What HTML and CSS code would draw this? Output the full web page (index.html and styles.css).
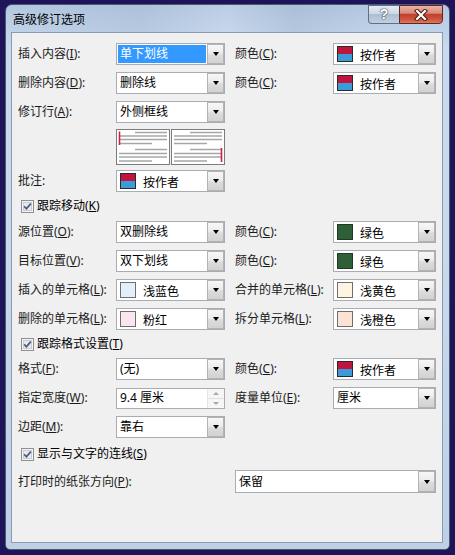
FILE: index.html
```html
<!DOCTYPE html>
<html lang="zh-CN">
<head>
<meta charset="utf-8">
<title>高级修订选项</title>
<link rel="stylesheet" href="styles.css">
</head>
<body>
<div class="window">
  <div class="titlebar">
    <div class="title">高级修订选项</div>
    <div class="caption">
      <div class="btn-help">?</div>
      <div class="btn-close">
        <svg width="14" height="12" viewBox="0 0 14 12"><path d="M3 2 L11 10 M11 2 L3 10" stroke="#4a1c16" stroke-width="4.2" stroke-linecap="square"/><path d="M3 2 L11 10 M11 2 L3 10" stroke="#ffffff" stroke-width="2.2" stroke-linecap="square"/></svg>
      </div>
    </div>
  </div>
  <div class="client">
    <div class="row first">
      <div class="lab">插入内容(<u>I</u>):</div>
      <div class="combo"><span class="val selected">单下划线</span><span class="drop"></span></div>
      <div class="lab lab-r">颜色(<u>C</u>):</div>
      <div class="combo"><span class="val"><i class="sw sw-author"></i><span class="swt">按作者</span></span><span class="drop"></span></div>
    </div>
    <div class="row">
      <div class="lab">删除内容(<u>D</u>):</div>
      <div class="combo"><span class="val">删除线</span><span class="drop"></span></div>
      <div class="lab lab-r">颜色(<u>C</u>):</div>
      <div class="combo"><span class="val"><i class="sw sw-author"></i><span class="swt">按作者</span></span><span class="drop"></span></div>
    </div>
    <div class="row">
      <div class="lab">修订行(<u>A</u>):</div>
      <div class="combo"><span class="val">外侧框线</span><span class="drop"></span></div>
    </div>
    <div class="row preview-row gap6">
      <div></div>
      <div class="preview">
        <svg width="54" height="36" viewBox="0 0 54 36">
          <rect x="0.5" y="0.5" width="53" height="35" fill="#fff" stroke="#7c7c7c"/>
          <g stroke="#a6a6a6" stroke-width="1.6">
            <path d="M19 3.5 H51 M3 7 H51 M3 10.5 H51 M3 14.5 H36 M19 20.5 H51 M3 24.5 H51 M3 28 H51 M3 32 H36"/>
          </g>
          <path d="M3.5 2.5 V16" stroke="#d0203a" stroke-width="1.6"/>
        </svg>
        <svg width="54" height="36" viewBox="0 0 54 36">
          <rect x="0.5" y="0.5" width="53" height="35" fill="#fff" stroke="#7c7c7c"/>
          <g stroke="#a6a6a6" stroke-width="1.6">
            <path d="M19 3.5 H51 M3 7 H51 M3 10.5 H51 M3 14.5 H36 M19 20.5 H51 M3 24.5 H51 M3 28 H51 M3 32 H36"/>
          </g>
          <path d="M50.5 19 V33" stroke="#d0203a" stroke-width="1.6"/>
        </svg>
      </div>
    </div>
    <div class="row gap5">
      <div class="lab">批注:</div>
      <div class="combo"><span class="val"><i class="sw sw-author"></i><span class="swt">按作者</span></span><span class="drop"></span></div>
    </div>
    <div class="check-row gap3">
      <span class="cb"><svg width="13" height="13" viewBox="0 0 13 13"><rect x="0.5" y="0.5" width="12" height="12" fill="#f4f4f4" stroke="#8e8f8f"/><rect x="2.5" y="2.5" width="8" height="8" fill="#e6e9ef" stroke="#c7ccd6"/><path d="M3.2 6.4 L5.4 8.8 L9.8 3.6" fill="none" stroke="#4c5a78" stroke-width="1.7"/></svg></span>
      <span>跟踪移动(<u>K</u>)</span>
    </div>
    <div class="row gap4">
      <div class="lab">源位置(<u>O</u>):</div>
      <div class="combo"><span class="val">双删除线</span><span class="drop"></span></div>
      <div class="lab lab-r">颜色(<u>C</u>):</div>
      <div class="combo"><span class="val"><i class="sw sw-green"></i><span class="swt">绿色</span></span><span class="drop"></span></div>
    </div>
    <div class="row">
      <div class="lab">目标位置(<u>V</u>):</div>
      <div class="combo"><span class="val">双下划线</span><span class="drop"></span></div>
      <div class="lab lab-r">颜色(<u>C</u>):</div>
      <div class="combo"><span class="val"><i class="sw sw-green"></i><span class="swt">绿色</span></span><span class="drop"></span></div>
    </div>
    <div class="row">
      <div class="lab">插入的单元格(<u>L</u>):</div>
      <div class="combo"><span class="val"><i class="sw sw-lblue"></i><span class="swt">浅蓝色</span></span><span class="drop"></span></div>
      <div class="lab lab-r">合并的单元格(<u>L</u>):</div>
      <div class="combo"><span class="val"><i class="sw sw-lyellow"></i><span class="swt">浅黄色</span></span><span class="drop"></span></div>
    </div>
    <div class="row">
      <div class="lab">删除的单元格(<u>L</u>):</div>
      <div class="combo"><span class="val"><i class="sw sw-pink"></i><span class="swt">粉红</span></span><span class="drop"></span></div>
      <div class="lab lab-r">拆分单元格(<u>L</u>):</div>
      <div class="combo"><span class="val"><i class="sw sw-lorange"></i><span class="swt">浅橙色</span></span><span class="drop"></span></div>
    </div>
    <div class="check-row gap3">
      <span class="cb"><svg width="13" height="13" viewBox="0 0 13 13"><rect x="0.5" y="0.5" width="12" height="12" fill="#f4f4f4" stroke="#8e8f8f"/><rect x="2.5" y="2.5" width="8" height="8" fill="#e6e9ef" stroke="#c7ccd6"/><path d="M3.2 6.4 L5.4 8.8 L9.8 3.6" fill="none" stroke="#4c5a78" stroke-width="1.7"/></svg></span>
      <span>跟踪格式设置(<u>T</u>)</span>
    </div>
    <div class="row gap3">
      <div class="lab">格式(<u>F</u>):</div>
      <div class="combo"><span class="val">(无)</span><span class="drop"></span></div>
      <div class="lab lab-r">颜色(<u>C</u>):</div>
      <div class="combo"><span class="val"><i class="sw sw-author"></i><span class="swt">按作者</span></span><span class="drop"></span></div>
    </div>
    <div class="row">
      <div class="lab">指定宽度(<u>W</u>):</div>
      <div class="spin"><span class="val">9.4 厘米</span><span class="spin-btns"><span class="up"></span><span class="down"></span></span></div>
      <div class="lab lab-r">度量单位(<u>E</u>):</div>
      <div class="combo"><span class="val">厘米</span><span class="drop"></span></div>
    </div>
    <div class="row">
      <div class="lab">边距(<u>M</u>):</div>
      <div class="combo"><span class="val">靠右</span><span class="drop"></span></div>
    </div>
    <div class="check-row gap5">
      <span class="cb"><svg width="13" height="13" viewBox="0 0 13 13"><rect x="0.5" y="0.5" width="12" height="12" fill="#f4f4f4" stroke="#8e8f8f"/><rect x="2.5" y="2.5" width="8" height="8" fill="#e6e9ef" stroke="#c7ccd6"/><path d="M3.2 6.4 L5.4 8.8 L9.8 3.6" fill="none" stroke="#4c5a78" stroke-width="1.7"/></svg></span>
      <span>显示与文字的连线(<u>S</u>)</span>
    </div>
    <div class="row wide gap5">
      <div class="lab">打印时的纸张方向(<u>P</u>):</div>
      <div class="combo tall"><span class="val">保留</span><span class="drop"></span></div>
    </div>
  </div>
</div>
</body>
</html>
```

FILE: styles.css
```css
* { box-sizing: border-box; }
html, body { margin: 0; }
body {
  width: 455px;
  height: 555px;
  overflow: hidden;
  padding: 4px 5px 5px 5px;
  background: #1f1459;
  font-family: "Noto Sans", "Noto Sans CJK SC", sans-serif;
  font-size: 12px;
  line-height: 16px;
  color: #000;
}
u { text-decoration: underline; text-underline-offset: 1px; }

.window {
  width: 445px;
  height: 546px;
  border: 1px solid #4d5b72;
  border-radius: 7px 7px 5px 5px;
  background: linear-gradient(180deg, #b3c8e1 0%, #cadaee 8%, #c8d9ec 45%, #bed0e6 100%);
  display: flex;
  flex-direction: column;
}

.titlebar {
  height: 27px;
  display: flex;
  align-items: flex-start;
  background: linear-gradient(90deg, rgba(255,255,255,0) 0%, rgba(160,180,205,0.35) 30%, rgba(255,255,255,0.1) 50%, rgba(150,170,195,0.3) 65%, rgba(255,255,255,0) 85%);
}
.title {
  flex: 1;
  padding: 6px 0 0 7px;
  font-family: "Noto Sans CJK SC", sans-serif;
  font-size: 12px;
  line-height: 16px;
  color: #000;
}
.caption {
  display: flex;
  margin-right: 6px;
}
.btn-help {
  width: 31px;
  height: 19px;
  border: 1px solid #5f6f86;
  border-right: none;
  border-radius: 0 0 0 4px;
  background: linear-gradient(180deg, #e4ebf4 0%, #cdd8e6 45%, #aebdd1 50%, #c3d0e1 100%);
  color: #fff;
  font-family: "Liberation Sans", sans-serif;
  font-weight: bold;
  font-size: 14px;
  line-height: 17px;
  text-align: center;
  text-shadow: 0 0 2px #2c3645, 0 0 1px #2c3645;
}
.btn-close {
  width: 44px;
  height: 19px;
  border: 1px solid #5a2a26;
  border-radius: 0 0 4px 0;
  background: linear-gradient(180deg, #eab2a6 0%, #d98a79 42%, #c2412c 50%, #d0563f 80%, #e07a5a 100%);
  display: flex;
  align-items: center;
  justify-content: center;
}

.client {
  flex: 1;
  margin: 0 6px 6px 5px;
  border: 1px solid #8a9ab0;
  background: #f0f0f0;
  padding: 10px 6px 0 6px;
}

.row {
  display: grid;
  grid-template-columns: 98px 109px 108px 103px;
  align-items: center;
  height: 22px;
  margin-top: 7px;
}
.row.first { margin-top: 0; }
.row.wide { grid-template-columns: 217px 201px; height: 23px; }
.preview-row { height: 36px; }
.gap3 { margin-top: 3px; }
.gap4 { margin-top: 4px; }
.gap5 { margin-top: 5px; }
.gap6 { margin-top: 6px; }

.lab {
  white-space: nowrap;
  color: #1a1a1a;
}
.lab-r { padding-left: 10px; }

.combo, .spin {
  height: 22px;
  border: 1px solid #a9acb2;
  background: #fff;
  display: flex;
  align-items: stretch;
}
.combo.tall { height: 23px; }
.spin { height: 21px; }

.val {
  flex: 1;
  display: flex;
  align-items: center;
  padding-left: 3px;
  white-space: nowrap;
}
.val.selected {
  margin: 1px 1px 1px 1px;
  padding-left: 2px;
  background: #3399ff;
  color: #fff;
}

.drop {
  width: 17px;
  border: 1px solid #b3b3b3;
  background: linear-gradient(180deg, #f7f7f7 0%, #ececec 45%, #dcdcdc 55%, #d2d2d2 100%);
  display: flex;
  align-items: center;
  justify-content: center;
}
.drop::after {
  content: "";
  width: 0;
  height: 0;
  border-left: 3.5px solid transparent;
  border-right: 3.5px solid transparent;
  border-top: 4px solid #000;
}

.sw {
  display: block;
  width: 16px;
  height: 16px;
  margin-right: 7px;
  border: 1px solid #555;
  flex: none;
}
.swt { padding-top: 3px; }
.sw-author { background: linear-gradient(180deg, #c0143c 0%, #c0143c 50%, #3b9ad8 50%, #3b9ad8 100%); border-color: #2b2b2b; }
.sw-green { background: #2f5f37; border-color: #1e3a22; }
.sw-lblue { background: #e3effa; border-color: #6e6e6e; }
.sw-pink { background: #fbe5ee; border-color: #6e6e6e; }
.sw-lyellow { background: #fdf5e1; border-color: #6e6e6e; }
.sw-lorange { background: #fbe3d4; border-color: #6e6e6e; }

.spin-btns {
  width: 17px;
  display: flex;
  flex-direction: column;
  border-left: 1px solid #e6e6e6;
}
.spin-btns span {
  flex: 1;
  display: flex;
  align-items: center;
  justify-content: center;
  background: #f6f6f6;
}
.spin-btns .up { border-bottom: 1px solid #e2e2e2; }
.spin-btns .up::after {
  content: "";
  border-left: 3px solid transparent;
  border-right: 3px solid transparent;
  border-bottom: 3px solid #a8a8a8;
}
.spin-btns .down::after {
  content: "";
  border-left: 3px solid transparent;
  border-right: 3px solid transparent;
  border-top: 3px solid #a8a8a8;
}

.preview {
  display: flex;
  gap: 1px;
  height: 36px;
}
.preview svg { display: block; }

.check-row {
  display: flex;
  align-items: center;
  height: 22px;
  padding-left: 3px;
  gap: 3px;
}
.cb { display: flex; }
.cb svg { display: block; }
```
